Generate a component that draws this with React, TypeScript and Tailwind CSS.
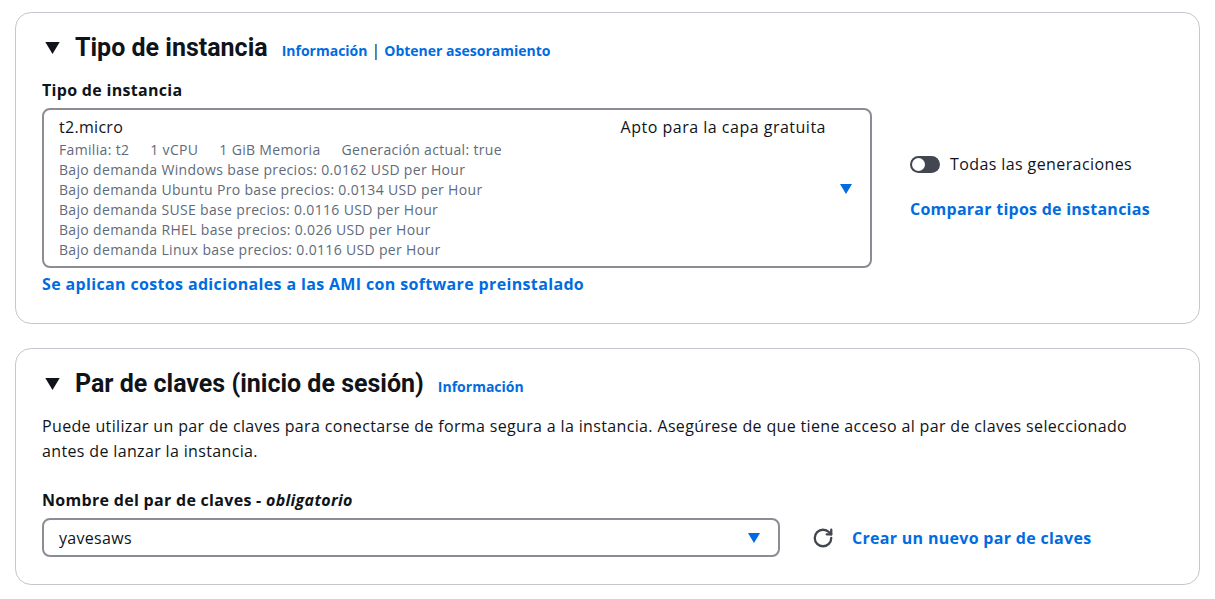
import { RotateCw } from 'lucide-react';

const priceLines = [
  'Bajo demanda Windows base precios: 0.0162 USD per Hour',
  'Bajo demanda Ubuntu Pro base precios: 0.0134 USD per Hour',
  'Bajo demanda SUSE base precios: 0.0116 USD per Hour',
  'Bajo demanda RHEL base precios: 0.026 USD per Hour',
  'Bajo demanda Linux base precios: 0.0116 USD per Hour',
];

function Caret({ className = '' }: { className?: string }) {
  return (
    <svg width="12" height="10" viewBox="0 0 12 10" className={className}>
      <path d="M0 0 L12 0 L6 10 Z" fill="currentColor" />
    </svg>
  );
}

function SectionHeading({ title, children }: { title: string; children?: React.ReactNode }) {
  return (
    <div className="flex items-center">
      <Caret className="text-[#0f141a] mr-[15px] ml-[3px] w-[15px] h-[12px]" />
      <h2 className="text-[25px] font-bold text-[#0f141a] leading-[30px] font-['Roboto',sans-serif]">{title}</h2>
      <div className="ml-[14px] mt-[4px] flex items-center text-[14px] font-bold text-[#006ce0]">{children}</div>
    </div>
  );
}

export default function App() {
  return (
    <div className="w-[1215px] h-[599px] bg-white pt-[12px] px-[15px] font-['Open_Sans','Noto_Sans',sans-serif] text-[#0f141a]">
      {/* Tipo de instancia */}
      <div className="h-[312px] border border-[#c6c6cd] rounded-[16px] px-[26px] pt-[20px]">
        <SectionHeading title="Tipo de instancia">
          <span>Información</span>
          <span className="mx-[4px] text-[#0f141a] font-normal text-[16px]">|</span>
          <span>Obtener asesoramiento</span>
        </SectionHeading>
        <div className="mt-[16px] text-[16px] font-bold leading-[22px] tracking-[0.3px]">Tipo de instancia</div>
        <div className="mt-[7px] flex">
          <div className="w-[830px] h-[160px] border-2 border-[#8c8c94] rounded-[8px] pl-[15px] pr-[18px] pt-[6px] flex">
            <div className="flex-1">
              <div className="text-[16px] leading-[22px] tracking-[0.3px]">t2.micro</div>
              <div className="text-[14px] leading-[20px] text-[#5f6b7a] mt-[2px] tracking-[0.33px]">
                <div className="flex gap-[21px]">
                  <span>Familia: t2</span>
                  <span>1 vCPU</span>
                  <span>1 GiB Memoria</span>
                  <span>Generación actual: true</span>
                </div>
                {priceLines.map(line => (
                  <div key={line}>{line}</div>
                ))}
              </div>
            </div>
            <div className="flex flex-col items-end">
              <div className="text-[16px] leading-[22px] mr-[26px] tracking-[0.5px]">Apto para la capa gratuita</div>
              <Caret className="text-[#006ce0] mt-[46px]" />
            </div>
          </div>
          <div className="ml-[38px] pt-[44px]">
            <div className="flex items-center gap-[10px]">
              <div className="w-[30px] h-[17px] rounded-full bg-[#424650] flex items-center pl-[2px]">
                <div className="w-[13px] h-[13px] rounded-full bg-white" />
              </div>
              <span className="text-[16px] tracking-[0.4px]">Todas las generaciones</span>
            </div>
            <div className="mt-[21px] text-[16px] font-bold text-[#006ce0] tracking-[0.25px]">
              Comparar tipos de instancias
            </div>
          </div>
        </div>
        <div className="mt-[4px] text-[16px] font-bold text-[#006ce0] tracking-[0.35px]">
          Se aplican costos adicionales a las AMI con software preinstalado
        </div>
      </div>

      {/* Par de claves */}
      <div className="mt-[24px] h-[237px] border border-[#c6c6cd] rounded-[16px] px-[26px] pt-[20px]">
        <SectionHeading title="Par de claves (inicio de sesión)">
          <span>Información</span>
        </SectionHeading>
        <p className="mt-[15px] text-[16px] leading-[25px] max-w-[1110px] tracking-[0.35px]">
          Puede utilizar un par de claves para conectarse de forma segura a la instancia. Asegúrese de que tiene
          acceso al par de claves seleccionado antes de lanzar la instancia.
        </p>
        <div className="mt-[25px] text-[16px] font-bold leading-[22px] tracking-[0.3px]">
          Nombre del par de claves - <span className="italic">obligatorio</span>
        </div>
        <div className="mt-[7px] flex items-center">
          <div className="w-[738px] h-[39px] border-2 border-[#8c8c94] rounded-[8px] pl-[15px] pr-[18px] flex items-center justify-between">
            <span className="text-[16px] tracking-[0.3px]">yavesaws</span>
            <Caret className="text-[#006ce0]" />
          </div>
          <RotateCw className="ml-[32px] w-[22px] h-[22px] text-[#424650]" strokeWidth={2.5} />
          <span className="ml-[18px] text-[16px] font-bold text-[#006ce0] tracking-[0.3px]">
            Crear un nuevo par de claves
          </span>
        </div>
      </div>
    </div>
  );
}
